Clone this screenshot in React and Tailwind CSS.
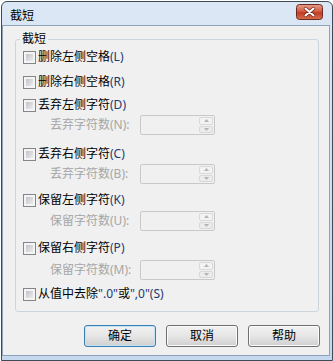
import React from 'react';

const font = "font-['Noto_Sans','Noto_Sans_CJK_SC',sans-serif]";

const Mn = ({ children, disabled }) => (
    <span className={disabled ? 'text-[#a6a6a6]' : 'text-[#22396f]'}>{children}</span>
);

const Box = () => (
    <div className="w-[13px] h-[13px] border border-[#858687] bg-[#f4f4f4] p-[2px]">
        <div className="w-full h-full bg-gradient-to-br from-[#c0c4cb] to-[#ececec]"></div>
    </div>
);

const CheckRow = ({ label, mn, className = '' }) => (
    <div className={`h-[20px] flex items-center pl-[7px] gap-[2px] ${className}`}>
        <Box />
        <span className="text-[12px] leading-none text-black">
            {label}
            <Mn>{mn}</Mn>
        </span>
    </div>
);

const SpinRow = ({ label, mn, className = '' }) => (
    <div className={`h-[20px] flex items-center pl-[34px] ${className}`}>
        <span className="w-[90px] text-[12px] leading-none text-[#a6a6a6]">
            {label}
            <Mn disabled>{mn}</Mn>
        </span>
        <div className="w-[75px] h-[20px] border border-[#c9c9c9] rounded-[2px] bg-[#f0f0f0] flex justify-end p-[1px]">
            <div className="w-[14px] flex flex-col gap-[1px]">
                <div className="flex-1 border border-[#d9d9d9] rounded-[2px] bg-[#f3f3f3] flex items-center justify-center">
                    <svg width="5" height="3" viewBox="0 0 5 3"><path d="M0 3 L2.5 0 L5 3 Z" fill="#b4b4b4" /></svg>
                </div>
                <div className="flex-1 border border-[#d9d9d9] rounded-[2px] bg-[#ececec] flex items-center justify-center">
                    <svg width="5" height="3" viewBox="0 0 5 3"><path d="M0 0 L2.5 3 L5 0 Z" fill="#b4b4b4" /></svg>
                </div>
            </div>
        </div>
    </div>
);

const Btn = ({ children, primary }) => (
    <button
        className={`w-[72px] h-[22px] rounded-[3px] border text-[12px] leading-none text-black bg-gradient-to-b from-[#f2f2f2] via-[#e6e6e6] to-[#cfcfcf] ${primary ? 'border-[#3c7fb1] shadow-[inset_0_0_0_1px_#bfe4f8]' : 'border-[#707070] shadow-[inset_0_0_0_1px_#fbfbfb]'}`}
    >
        {children}
    </button>
);

// Windows 7 style red close button
const CloseIcon = () => (
    <svg width="27" height="16" viewBox="0 0 27 16" className="block">
        <defs>
            <linearGradient id="closeBg" x1="0" y1="0" x2="0" y2="1">
                <stop offset="0" stopColor="#e7a08e" />
                <stop offset="0.45" stopColor="#d45d42" />
                <stop offset="0.55" stopColor="#c23c22" />
                <stop offset="1" stopColor="#d6704f" />
            </linearGradient>
        </defs>
        <rect x="0.5" y="0.5" width="26" height="15" rx="3" fill="url(#closeBg)" stroke="#6b2a1f" />
        <path d="M9.5 4.5 L17.5 11.5 M17.5 4.5 L9.5 11.5" stroke="#6a2619" strokeWidth="3.4" strokeLinecap="round" />
        <path d="M9.5 4.5 L17.5 11.5 M17.5 4.5 L9.5 11.5" stroke="#ffffff" strokeWidth="2" strokeLinecap="round" />
    </svg>
);

export default function App() {
    return (
        <div className={`w-[333px] h-[361px] bg-white pl-[1px] pt-[1px] ${font}`}>
            <div className="w-[332px] h-[360px] border border-[#3f4a57] rounded-t-[6px] bg-gradient-to-b from-[#dbe7f4] to-[#c5d8ed] flex flex-col overflow-hidden">
                {/* title bar */}
                <div className="h-[23px] flex items-start justify-between pl-[8px] pr-[9px] pt-[2px]">
                    <span className="text-[12px] leading-none text-black mt-[6px]">截短</span>
                    <CloseIcon />
                </div>

                {/* content */}
                <div className="w-[328px] h-[331px] border border-[#8fa3b8] bg-[#f0f0f0] flex flex-col">
                    <fieldset className="ml-[12px] mt-[6px] w-[304px] border border-[#cdd5dc] rounded-[3px] pb-[7px]">
                        <legend className="ml-[4px] px-[2px] text-[12px] leading-[14px] text-black">截短</legend>
                        <CheckRow label="删除左侧空格" mn="(L)" className="mt-[1px]" />
                        <CheckRow label="删除右侧空格" mn="(R)" className="mt-[5px]" />
                        <CheckRow label="丢弃左侧字符" mn="(D)" className="mt-[3px]" />
                        <SpinRow label="丢弃字符数" mn="(N):" />
                        <CheckRow label="丢弃右侧字符" mn="(C)" className="mt-[9px]" />
                        <SpinRow label="丢弃字符数" mn="(B):" />
                        <CheckRow label="保留左侧字符" mn="(K)" className="mt-[6px]" />
                        <SpinRow label="保留字符数" mn="(U):" className="mt-[1px]" />
                        <CheckRow label="保留右侧字符" mn="(P)" className="mt-[7px]" />
                        <SpinRow label="保留字符数" mn="(M):" className="mt-[2px]" />
                        <div className="h-[20px] flex items-center pl-[7px] gap-[2px] mt-[4px]">
                            <Box />
                            <span className="text-[12px] leading-none text-black">
                                从值中去除<Mn>".0"</Mn>或<Mn>",0"(S)</Mn>
                            </span>
                        </div>
                    </fieldset>

                    <div className="flex justify-end gap-[10px] pr-[9px] mt-[13px]">
                        <Btn primary>确定</Btn>
                        <Btn>取消</Btn>
                        <Btn>帮助</Btn>
                    </div>
                </div>
            </div>
        </div>
    );
}
